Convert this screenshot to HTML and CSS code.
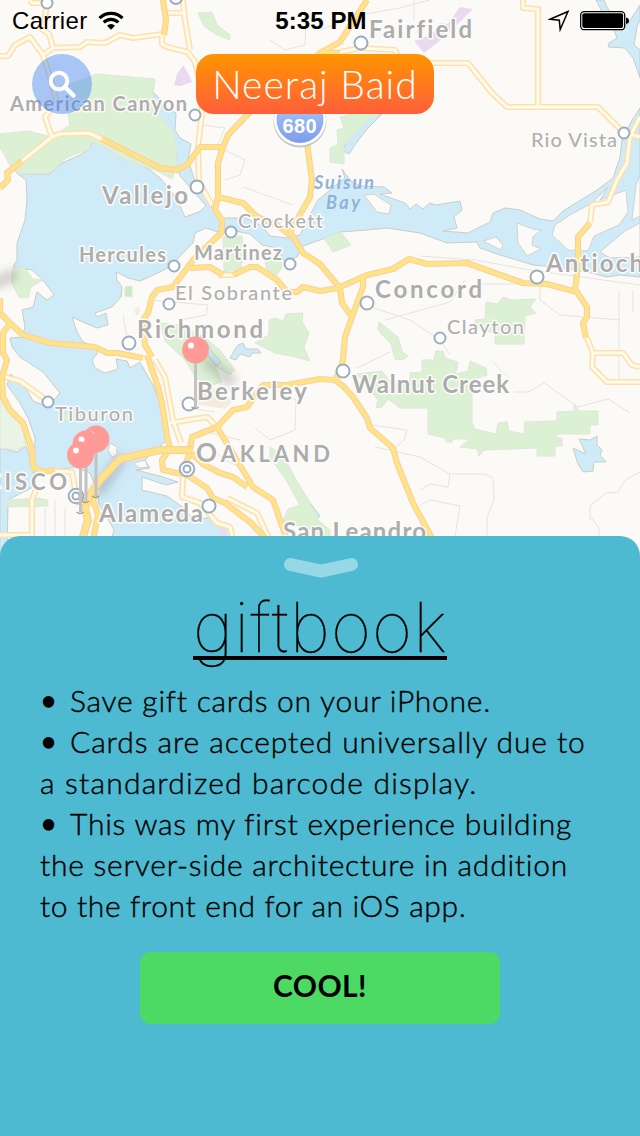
FILE: index.html
```html
<!DOCTYPE html>
<html lang="en">
<head>
<meta charset="utf-8">
<title>giftbook</title>
<link rel="stylesheet" href="styles.css">
</head>
<body>
<div class="screen">
  <svg class="map" viewBox="0 0 640 560" width="640" height="560">
    <defs>
      <linearGradient id="shield" x1="0" y1="0" x2="0" y2="1"><stop offset="0" stop-color="#a9cdf5"/><stop offset="1" stop-color="#7f9cec"/></linearGradient>
      <filter id="soft" x="-50%" y="-50%" width="200%" height="200%"><feGaussianBlur stdDeviation="5"/></filter>
      <g id="pin">
        <path d="M-4 57q4 3 7 0" fill="none" stroke="#8c8c8c" stroke-width="1.3" opacity=".8"/>
        <path d="M0 10V57" stroke="#c3c3c5" stroke-width="3"/>
        <circle r="13.4" fill="#ff9a97"/>
        <circle cx="-4.5" cy="-4.5" r="3" fill="#fff"/>
      </g>
    </defs>

    <g class="water">
      <path d="M0 147L7 154 14 170 18 174 50 174 62 163 80 155 89 149 92 142 105 147 119 152 125 160 140 164 150 170 160 178 168 187 177 200 185 217 199 212 206 206 201 200 190 187 181 177 176 168 177 155 170 148 163 135 158 113 153 92 158 97 163 107 176 113 175 130 180 138 191 144 188 160 196 184 210 204 218 218 246 218 262 226 270 236 288 238 300 235 310 215 318 200 330 190 345 178 342 169 350 180 360 186 384 187 392 193 380 194 405 203 410 209 416 204 423 209 430 203 436 205 460 201 462 210 454 217 457 228 443 231 468 233 490 222 493 213 505 208 520 210 540 219 553 221 563 211 597 190 613 178 620 157 622 140 632 120 640 108V277L620 275 607 277 587 272 553 267 533 265 500 255 480 248 477 242 447 243 420 233 387 228 367 230 340 232 320 240 303 246 297 257 285 262 277 248 262 245 250 234 230 230 221 233 206 228 195 233 193 243 183 253 170 267 147 278 140 281 128 278 116 272 117 280 122 287 121 297 112 307 95 313 97 317 106 313 108 325 97 328 85 323 72 317 77 332 83 342 97 347 97 354 92 360 95 368 105 373 118 369 116 359 127 361 130 368 140 362 146 373 153 385 159 400 163 420 167 440 152 453 145 460 150 468 136 470 160 476 178 482 166 485 142 477 142 490 167 496 184 508 194 520 212 517 222 524 230 528V560H105L114 530 107 517 99 505 97 490 90 473 75 467 57 470 43 474 33 472 35 486 8 500 7 560H0V448L17 452 26 446 34 470 35 438 28 418 20 403 7 385 11 374 25 387 33 401 48 407 60 393 43 372 20 357 12 347 10 338 22 337 25 327 22 310 33 307 37 292 47 300 54 295 43 280 32 270 13 267 17 260 17 243 25 220 27 200 26 180 18 174Z"/>
      <path d="M382 114L368 128 357 142 349 154 343 151 347 139 362 118Z"/>
      <path d="M596 0L602 12 612 25 617 38 609 43 608 47 625 48 633 58 640 78V50L634 45 637 27 640 20V5L627 25 616 22 607 7 604 0Z"/>
      <path d="M573 448L586 454 579 439 590 440 597 436 597 445 602 450 600 455 606 462 594 462 593 471 583 472 578 464Z"/>
      <path d="M230 358L235 349 238 345 243 343 246 349 258 349 261 353 252 353 250 357 240 354 236 360Z"/>
      <path d="M286 465L296 485 308 500 320 516 316 519 300 500Z"/>
    </g>
    <g class="land-patch">
      <path d="M364 195L374 194 391 205 389 214 377 212Z"/>
      <path d="M517 223L533 229 541 230 533 237 532 245 541 249 527 256 518 243Z"/>
      <path d="M483 241L496 237 503 245 501 250Z"/>
      <path d="M552 235L555 225 570 215 592 203 608 187 600 200 626 190 628 212 619 225 594 236 588 251 568 250Z"/>
      <path d="M600 252L625 231 640 223V257L610 258Z"/>
      <path d="M636 185L640 175V216L632 220Z"/>
      <path d="M110 443L117 447 117 455 112 457 108 450Z"/>
      <path d="M134 463L145 460 148 467 139 468Z"/>
    </g>
    <g class="park">
      <path d="M68 85L97 74 155 79 153 95 159 114 175 135 177 165 172 179 157 171 125 160 104 147 91 142 89 149 66 158 50 173 19 174 10 166 0 146V134L28 131 52 137 70 125 68 115Z"/>
      <path d="M198 13L212 12 217 25 230 35 230 40 215 34 204 26Z"/>
      <path d="M340 117L366 111 380 115 368 120 356 132 344 145 344 164 330 162 330 148 338 145 337 130 344 128Z"/>
      <path d="M223 237L242 236 244 250 241 269 224 272Z"/>
      <path d="M265 261L280 258 282 268 275 277 266 268Z"/>
      <path d="M324 238L341 232 351 245 333 252Z"/>
      <path d="M13 268L24 267 33 279 43 280 31 287 28 298 19 297 11 282Z"/>
      <path d="M125 287L132 286 132 297 125 296Z" fill="#c9ebcb"/>
      <path d="M269 320L275 318 283 321 286 314 303 313 302 322 309 333 304 347 310 361 295 357 275 353 255 343 269 335Z"/>
      <path d="M160 323L178 325 205 338 220 350 235 370 230 375 215 366 222 382 208 386 196 378 185 360 165 341Z"/>
      <path d="M475 320L485 319 486 302 498 304 503 297 512 300 536 299 530 307 536 313 525 316 524 344 495 344 495 334 475 326Z"/>
      <path d="M379 322L398 337 402 351 408 356 402 360 395 359 391 344 378 330Z"/>
      <path d="M436 351L443 351 445 358 458 362 457 370 436 371 434 360Z"/>
      <path d="M357 374L382 371 390 382 410 382 410 373 422 372 422 360H446L456 364 456 374 468 371 470 361 486 368 487 375 472 380 472 422 475 429 496 434 498 423 507 422 509 431 524 434 525 422 557 421 557 412 574 411 574 404 579 411H598V425H590V434H557V438H562V446H555V456H537V448L484 450 479 456 477 449 460 447 470 439 452 439 452 442 446 442 445 438 428 434 428 408 400 408 388 399 382 407 376 408 378 400Z"/>
      <path d="M0 398L8 410 22 425 26 446 15 450 0 448Z" fill="#eaf4e4"/>
      <path d="M62 413L74 415 76 420 62 421Z"/>
      <path d="M7 500L38 498 48 500 48 506 8 507Z"/>
      <path d="M270 447L283 455 295 478 309 501 318 520 330 530 330 545 312 530 283 521 288 509 300 505 285 478 270 458Z"/>
    </g>
    <g class="water">
      <path d="M200 335L206 341 212 352 221 362 216 366 210 358 204 348Z"/>
    </g>
    <path d="M174 85L177 74 183 65 188 73 192 82 180 86ZM414 41L425 37 435 31 440 23 448 24 452 18 460 7 473 9 462 20 442 39 424 53ZM220 527h6v12h-6Z" fill="#e9daee"/>
    <path d="M195 397L215 388 233 400 226 409 199 405ZM134 311l3-5 4 4-4 6Z" fill="#f5ecdf"/>
    <path class="minor" d="M320 30L360 15 400 8 430 0M414 0V20M270 40L285 50 305 45 306 20M203 125L225 128 215 150M225 150L245 160 240 175 225 180M243 187L293 205M123 315L130 355M150 300L208 305 206 315 180 320M420 256L475 260 530 270 640 285M480 284H540V300L560 315 620 320M619 290V382M633 290V312M365 305L410 320 440 340 450 355M385 320L450 302 465 280M357 368L390 352M493 361L500 370 510 378M514 392H528L544 383 578 407 608 399 630 413M372 425L407 430 404 440 395 448M375 447L420 457 450 474H485L493 478 494 500 487 517V540M420 505L430 500 460 506 455 536M420 490L430 484 448 487 450 474M590 520V506L606 493 618 492 625 480 640 472M599 540V528L590 516M255 428L270 440 295 430 296 400 275 390M205 445L225 460 245 470M55 500V536M45 508V536M65 508V536M200 430L240 440M180 400L200 410 215 412"/>
    <path class="shadow" d="M120 460L100 490M-4 283L12 275M208 362L230 380" filter="url(#soft)"/>

    <g id="light-roads">
      <path class="light-casing" d="M0 56H8L15 45 30 37 43 55 53 48 80 47 87 42 105 43 120 35 133 38 163 34M47 3L43 30 49 34 53 48M30 0L32 3H47M43 55L50 77 57 103 45 117 52 137M162 35L162 44 167 47 188 52 195 62 200 83 202 113 198 147 199 182 212 205M183 0L185 20 190 50M167 13H184M22 161L52 137 60 134 88 133 102 139M340 52L360 48 395 50 402 63H468L492 93 507 107H598L623 132 640 137M523 0V8L538 9V107M590 223L592 205 608 202 613 190 617 180 627 163 630 137 640 117M587 338L593 353 592 367 607 382H640M593 353H623L632 365 640 367M155 360L165 377 173 420 181 443M170 423L207 417 217 427M183 477L182 497 200 503 217 523 230 527 233 540M227 498L257 513 270 540M50 471L72 472 76 495M32 540V500L37 487M0 535H30M5 377L20 381 45 399M218 275H233"/>
      <path class="light-fill" d="M0 56H8L15 45 30 37 43 55 53 48 80 47 87 42 105 43 120 35 133 38 163 34M47 3L43 30 49 34 53 48M30 0L32 3H47M43 55L50 77 57 103 45 117 52 137M162 35L162 44 167 47 188 52 195 62 200 83 202 113 198 147 199 182 212 205M183 0L185 20 190 50M167 13H184M22 161L52 137 60 134 88 133 102 139M340 52L360 48 395 50 402 63H468L492 93 507 107H598L623 132 640 137M523 0V8L538 9V107M590 223L592 205 608 202 613 190 617 180 627 163 630 137 640 117M587 338L593 353 592 367 607 382H640M593 353H623L632 365 640 367M155 360L165 377 173 420 181 443M170 423L207 417 217 427M183 477L182 497 200 503 217 523 230 527 233 540M227 498L257 513 270 540M50 471L72 472 76 495M32 540V500L37 487M0 535H30M5 377L20 381 45 399M218 275H233"/>
    </g>
    <g id="highways">
      <path class="road-casing" d="M163 0L166 20 164 35M0 188L8 180 7 173 22 161M102 139L160 168 177 170 187 165 200 147 223 147 228 135 247 115 300 70 320 53 340 42 367 0M320 53H340M223 147L218 163 218 197 215 210 222 220 222 232 193 260 173 287 157 290 152 297 148 313 143 320 145 345 152 357M147 355L158 387 162 403 167 437 170 448M218 197L243 203 257 217 277 225 290 235M307 143L312 180 310 197 290 232 303 253 320 264 340 288 342 303 352 317 345 337 343 360 336 380M190 268L210 267 223 275M233 275L250 267 257 267 277 280 287 292 297 292 303 287 320 291 338 288 367 275 393 269 409 259 427 264 467 263 523 283 547 284 577 292 587 307 587 317 583 323 586 338M575 291L578 263 578 237 590 223M363 277V287L352 317M217 427L233 410 247 407 263 385 287 385 320 379 335 380 343 386 353 397 367 418 370 428 393 448 397 463 413 503 433 540M190 450L192 437 217 427 253 487 273 500 280 520 287 540M170 448L162 460 163 470 187 475 207 488 213 498 225 503 250 522 272 545M185 466L190 452 203 464 220 473 233 477 247 487M0 298V313L10 323 23 335 50 343 95 347 107 353 117 353 143 358M10 323L3 333 3 353 7 360 2 377 3 397 10 410 23 423 32 450 33 467 43 472 55 470M97 490L93 500 98 515 93 540M76 502H88"/>
      <path class="road-fill" d="M163 0L166 20 164 35M0 188L8 180 7 173 22 161M102 139L160 168 177 170 187 165 200 147 223 147 228 135 247 115 300 70 320 53 340 42 367 0M320 53H340M223 147L218 163 218 197 215 210 222 220 222 232 193 260 173 287 157 290 152 297 148 313 143 320 145 345 152 357M147 355L158 387 162 403 167 437 170 448M218 197L243 203 257 217 277 225 290 235M307 143L312 180 310 197 290 232 303 253 320 264 340 288 342 303 352 317 345 337 343 360 336 380M190 268L210 267 223 275M233 275L250 267 257 267 277 280 287 292 297 292 303 287 320 291 338 288 367 275 393 269 409 259 427 264 467 263 523 283 547 284 577 292 587 307 587 317 583 323 586 338M575 291L578 263 578 237 590 223M363 277V287L352 317M217 427L233 410 247 407 263 385 287 385 320 379 335 380 343 386 353 397 367 418 370 428 393 448 397 463 413 503 433 540M190 450L192 437 217 427 253 487 273 500 280 520 287 540M170 448L162 460 163 470 187 475 207 488 213 498 225 503 250 522 272 545M185 466L190 452 203 464 220 473 233 477 247 487M0 298V313L10 323 23 335 50 343 95 347 107 353 117 353 143 358M10 323L3 333 3 353 7 360 2 377 3 397 10 410 23 423 32 450 33 467 43 472 55 470M97 490L93 500 98 515 93 540M76 502H88"/>
      <path class="road-casing bridge" d="M82 540L88 520 85 508 91 493 100 480 120 459 160 450 193 450"/>
      <path class="road-fill bridge" d="M82 540L88 520 85 508 91 493 100 480 120 459 160 450 193 450"/>
    </g>

    <g class="town">
      <circle cx="47" cy="3" r="5.5"/><circle cx="176" cy="-2" r="6"/><circle cx="195" cy="115" r="5.5"/><circle cx="361" cy="43" r="6.5"/><circle cx="624" cy="133" r="5.5"/><circle cx="197" cy="187" r="6.5"/><circle cx="231" cy="232" r="5.5"/><circle cx="174" cy="266" r="5.5"/><circle cx="290" cy="264" r="5.5"/><circle cx="169" cy="304" r="5.5"/><circle cx="129" cy="343" r="6.5"/><circle cx="367" cy="303" r="6.5"/><circle cx="440" cy="338" r="5.5"/><circle cx="537" cy="277" r="6.5"/><circle cx="343" cy="371" r="6.5"/><circle cx="48" cy="402" r="5.5"/><circle cx="189" cy="404" r="6.5"/><circle cx="209" cy="506" r="6.5"/><circle cx="187" cy="469" r="7.3"/><circle cx="187" cy="469" r="3.5"/><circle cx="76" cy="496" r="7.3"/><circle cx="76" cy="496" r="3.5"/>
    </g>
    <circle cx="300" cy="121" r="26.5" fill="#c8c8cc"/>
    <circle cx="300" cy="119.500" r="26" fill="#fff"/>
    <circle cx="300" cy="119.500" r="23.500" fill="url(#shield)"/>
    <text class="route" x="282.500" y="133" textLength="34">680</text>

    <g class="label">
      <text class="mid" x="10" y="111" textLength="177">American Canyon</text>
      <text class="city" x="369" y="38" textLength="103">Fairfield</text>
      <text class="city" x="102" y="204" textLength="86">Vallejo</text>
      <text class="small" x="531" y="147" textLength="86">Rio Vista</text>
      <text class="small" x="238" y="228" textLength="85">Crockett</text>
      <text class="mid" x="79" y="262" textLength="87">Hercules</text>
      <text class="mid" x="194" y="260" textLength="88">Martinez</text>
      <text class="small" x="175" y="300" textLength="117">El Sobrante</text>
      <text class="city" x="137" y="338" textLength="126">Richmond</text>
      <text class="city" x="375" y="298" textLength="107">Concord</text>
      <text class="small" x="447" y="334" textLength="77">Clayton</text>
      <text class="city" x="546" y="272" textLength="97">Antioch</text>
      <text class="city" x="352" y="393" textLength="157">Walnut Creek</text>
      <text class="city" x="197" y="400" textLength="110">Berkeley</text>
      <text class="small" x="55" y="421" textLength="78">Tiburon</text>
      <text class="city capital" x="196" y="462" textLength="134"><tspan class="initial">O</tspan>AKLAND</text>
      <text class="city capital" x="-14" y="490" textLength="81">CISCO</text>
      <text class="city" x="99" y="522" textLength="104">Alameda</text>
      <text class="city" x="283" y="540" textLength="143">San Leandro</text>
      <text class="bay" x="314" y="189" textLength="60">Suisun</text>
      <text class="bay" x="326" y="209" textLength="34">Bay</text>
    </g>
    <use href="#pin" x="96" y="439"/>
    <use href="#pin" x="86" y="444"/>
    <use href="#pin" x="80.500" y="455"/>
    <use href="#pin" x="195.500" y="350"/>
  </svg>

  <div class="top">
    <header class="status">
      <div class="status-left">
        <span class="carrier">Carrier</span>
        <svg width="26" height="20" viewBox="0 0 26 20"><g fill="none" stroke="#000" stroke-width="3.200"><path d="M1.500 7.200A16.300 16.300 0 0 1 24.500 7.200"/><path d="M5.700 11.400A10.300 10.300 0 0 1 20.300 11.400"/></g><path d="M9 14.700A5.700 5.700 0 0 1 17 14.700L13 18.700Z"/></svg>
      </div>
      <span class="time">5:35 PM</span>
      <div class="status-right">
        <svg width="22" height="22" viewBox="0 0 22 22"><path d="M2 9.300L20 1.500 12.200 19.500 11.300 10.300Z" fill="none" stroke="#000" stroke-width="1.500"/></svg>
        <svg width="50" height="20" viewBox="0 0 50 20"><rect x=".7" y=".7" width="44" height="18" rx="3.500" fill="#fff" stroke="#000" stroke-width="1.300"/><rect x="2.300" y="2.300" width="40.800" height="14.800" rx="2"/><path d="M46 6.500q3 .5 3 3.200t-3 3.200Z"/></svg>
      </div>
    </header>
    <div class="toolbar">
      <div class="search"><svg width="60" height="60" viewBox="0 0 60 60"><circle cx="27" cy="27" r="8.300" fill="none" stroke="#fff" stroke-width="4"/><path d="M33 33L41.500 41.500" stroke="#fff" stroke-width="4.500" stroke-linecap="round"/></svg></div>
      <div class="name">Neeraj Baid</div>
    </div>
  </div>

  <main class="panel">
    <svg class="chevron" width="76" height="24" viewBox="0 0 76 24"><path d="M7.500 7.500L38 14 68.500 7.500" fill="none" stroke="#96d8e5" stroke-width="13" stroke-linecap="round"/></svg>
    <h1 class="title">giftbook</h1>
    <div class="copy">
      <div class="line l1"><span class="dot">•</span>Save gift cards on your iPhone.</div>
      <div class="line l2"><span class="dot">•</span>Cards are accepted universally due to</div>
      <div class="line l3">a standardized barcode display.</div>
      <div class="line l4"><span class="dot">•</span>This was my first experience building</div>
      <div class="line l5">the server-side architecture in addition</div>
      <div class="line l6">to the front end for an iOS app.</div>
    </div>
    <div class="cool">COOL!</div>
  </main>
</div>
</body>
</html>
```
FILE: styles.css
```css
* { box-sizing: border-box; }
body { margin: 0; font-family: Lato, "Open Sans", sans-serif; color: #000; font-variant-ligatures: none; }
.screen { position: relative; width: 640px; height: 1136px; overflow: hidden; display: flex; flex-direction: column; background: #fcfaf7; }
.map { position: absolute; left: 0; top: 0; display: block; }
.top { position: relative; height: 536px; }

.water path { fill: #cfebf8; stroke: #c9cdca; stroke-width: 1; }
.land-patch path { fill: #fcfaf7; stroke: #d0d2cf; stroke-width: 1; }
.park { fill: #dcf1d4; stroke: #dfe6da; stroke-width: 1; }
.minor { fill: none; stroke: #e6e4df; stroke-width: 1; }
.shadow { fill: none; stroke: #777; stroke-width: 12; opacity: .33; stroke-linecap: round; }
.light-casing, .light-fill, .road-casing, .road-fill { fill: none; stroke-linejoin: round; }
.light-casing { stroke: #fde0ae; stroke-width: 6.2; }
.light-fill { stroke: #fffbea; stroke-width: 3; }
.road-casing { stroke: #fccf9f; stroke-width: 6.2; }
.road-fill { stroke: #fee486; stroke-width: 4; }
.road-casing.bridge { stroke-width: 8; }
.road-fill.bridge { stroke-width: 5.6; }
.town { fill: #fff; stroke: #9dadbf; stroke-width: 2; }
.label { fill: #acacac; stroke: #fdfcfa; stroke-width: 3; paint-order: stroke; stroke-linejoin: round; }
.city { font-size: 24px; font-weight: 700; }
.mid { font-size: 20px; font-weight: 700; }
.small { font-size: 20px; font-weight: 500; fill: #b0b0b0; }
.capital { font-size: 22px; }
.initial { font-size: 26px; }
.bay { font-size: 18px; font-weight: 700; font-style: italic; fill: #8fb1dc; stroke: none; }
.route { font: bold 20px "Liberation Sans", sans-serif; fill: #fff; }

.status { height: 40px; padding: 1px 10px 0 12px; display: grid; grid-template-columns: 1fr auto 1fr; align-items: center; font-family: "Liberation Sans", sans-serif; font-size: 24px; }
.status-left { display: flex; align-items: center; gap: 11px; }
.carrier { letter-spacing: 0.3px; }
.time { font-weight: 700; letter-spacing: 0.1px; }
.status-right { display: flex; align-items: center; justify-content: flex-end; gap: 10px; }
.toolbar { margin-top: 14px; padding-left: 32px; display: flex; gap: 104px; }
.search { width: 60px; height: 60px; border-radius: 50%; background: rgba(66, 133, 244, .45); }
.name { width: 238px; height: 60px; border-radius: 18px; background: linear-gradient(#ff9500, #ff5e3a); color: #fff; font-size: 39px; font-weight: 300; line-height: 60px; text-align: center; white-space: nowrap; letter-spacing: 1px; }

.panel { position: relative; flex: 1; display: flex; flex-direction: column; align-items: center; background: #4dbad1; border-radius: 20px 20px 0 0; }
.chevron { margin: 21px 0 0 2px; display: block; }
.title { margin: 11px 0 0; width: 254px; height: 68px; border-bottom: 4px solid #000; font-family: Inter, Lato, sans-serif; font-size: 69px; font-weight: 100; line-height: 71px; text-align: center; white-space: nowrap; letter-spacing: 1.2px; -webkit-text-stroke: .3px #000; }
.copy { width: 560px; margin-top: 20px; font-size: 30px; font-weight: 300; -webkit-text-stroke: .4px #000; }
.line { height: 41px; line-height: 41px; white-space: nowrap; }
.l1 { letter-spacing: .75px; }
.l2 { letter-spacing: .91px; }
.l3 { letter-spacing: 1.2px; }
.l4 { letter-spacing: .77px; }
.l5 { letter-spacing: .75px; }
.l6 { letter-spacing: .62px; }
.dot { display: inline-block; width: 30px; padding-left: 1px; font-size: 26px; line-height: 20px; letter-spacing: 0; font-weight: 700; vertical-align: 2px; -webkit-text-stroke: 0; }
.cool { width: 360px; height: 72px; margin-top: 26px; border-radius: 10px; background: #4cd964; font-size: 30px; font-weight: 700; line-height: 66px; text-align: center; letter-spacing: .4px; }
```
